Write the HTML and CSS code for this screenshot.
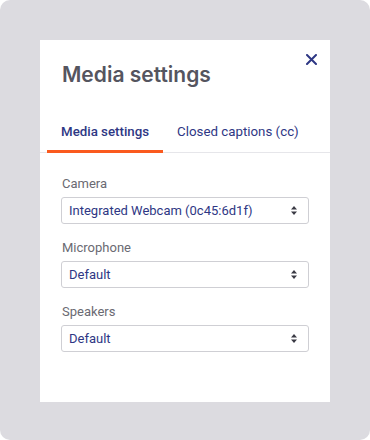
FILE: index.html
```html
<!DOCTYPE html>
<html lang="en">
  <head>
    <meta charset="UTF-8" />
    <title>Media settings</title>
    <link rel="stylesheet" href="styles.css">
  </head>
  <body>
    <div class="backdrop">
      <div class="modal">
        <button class="close" aria-label="Close">
          <svg width="11" height="11" viewBox="0 0 11 11">
            <path d="M1 1L10 10M10 1L1 10" stroke="#2e3784" stroke-width="2" stroke-linecap="round" />
          </svg>
        </button>
        <h2 class="title">Media settings</h2>

        <div class="tabs">
          <div class="tab active">Media settings</div>
          <div class="tab">Closed captions (cc)</div>
        </div>

        <div class="fields">
          <label class="field">
            <span class="label">Camera</span>
            <span class="select-wrap">
              <select>
                <option>Integrated Webcam (0c45:6d1f)</option>
              </select>
              <svg class="arrows" width="6" height="9" viewBox="0 0 6 9">
                <path d="M3 0L6 3.5H0Z M3 9L0 5.5H6Z" fill="#3a3a44" />
              </svg>
            </span>
          </label>

          <label class="field">
            <span class="label">Microphone</span>
            <span class="select-wrap">
              <select>
                <option>Default</option>
              </select>
              <svg class="arrows" width="6" height="9" viewBox="0 0 6 9">
                <path d="M3 0L6 3.5H0Z M3 9L0 5.5H6Z" fill="#3a3a44" />
              </svg>
            </span>
          </label>

          <label class="field">
            <span class="label">Speakers</span>
            <span class="select-wrap">
              <select>
                <option>Default</option>
              </select>
              <svg class="arrows" width="6" height="9" viewBox="0 0 6 9">
                <path d="M3 0L6 3.5H0Z M3 9L0 5.5H6Z" fill="#3a3a44" />
              </svg>
            </span>
          </label>
        </div>
      </div>
    </div>
  </body>
</html>
```

FILE: styles.css
```css
body {
  margin: 0;
  background-color: #ffffff;
  font-family: Roboto, "Noto Sans", sans-serif;
}
.backdrop {
  height: 440px;
  box-sizing: border-box;
  padding: 40px;
  background-color: #dcdbe0;
  border-radius: 10px;
}
.modal {
  position: relative;
  width: 290px;
  height: 362px;
  background-color: #ffffff;
}
.close {
  position: absolute;
  top: 14px;
  right: 13px;
  padding: 0;
  border: none;
  background: none;
  cursor: pointer;
  line-height: 0;
}
.title {
  margin: 0;
  padding: 21px 22px 0;
  font-family: Inter, "Noto Sans", sans-serif;
  font-size: 21px;
  font-weight: 600;
  line-height: 28px;
  color: #55555f;
}
.tabs {
  display: flex;
  margin-top: 22px;
  padding-left: 7px;
  border-bottom: 1px solid #e6e6ea;
}
.tab {
  padding: 13px 14px 11px;
  font-size: 13.3px;
  color: #2e3784;
}
.tab.active {
  font-weight: 500;
  border-bottom: 3px solid #fa5a1e;
  margin-bottom: -1px;
}
.fields {
  padding: 22px 21px 0 21px;
}
.field {
  display: block;
  margin-bottom: 15px;
}
.label {
  display: block;
  margin-left: 1px;
  margin-bottom: 5px;
  font-size: 13px;
  line-height: 17px;
  color: #6a6a72;
}
.select-wrap {
  position: relative;
  display: block;
}
select {
  display: block;
  width: 100%;
  height: 27px;
  padding: 0 24px 0 7px;
  font-family: inherit;
  font-size: 13px;
  color: #2e3784;
  background-color: #ffffff;
  border: 1px solid #cfcfd4;
  border-radius: 3px;
  appearance: none;
  -webkit-appearance: none;
}
.arrows {
  position: absolute;
  right: 12px;
  top: 9px;
  pointer-events: none;
}
```
